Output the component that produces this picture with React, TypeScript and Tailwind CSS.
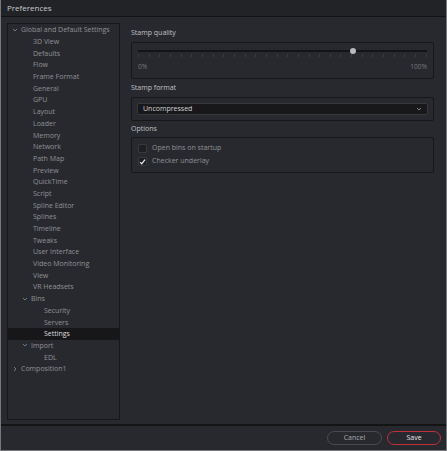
import React from 'react'

interface TreeItem {
  label: string
  depth: number
  chevron?: 'down' | 'right'
  selected?: boolean
}

const tree: TreeItem[] = [
  { label: 'Global and Default Settings', depth: 0, chevron: 'down' },
  { label: '3D View', depth: 1 },
  { label: 'Defaults', depth: 1 },
  { label: 'Flow', depth: 1 },
  { label: 'Frame Format', depth: 1 },
  { label: 'General', depth: 1 },
  { label: 'GPU', depth: 1 },
  { label: 'Layout', depth: 1 },
  { label: 'Loader', depth: 1 },
  { label: 'Memory', depth: 1 },
  { label: 'Network', depth: 1 },
  { label: 'Path Map', depth: 1 },
  { label: 'Preview', depth: 1 },
  { label: 'QuickTime', depth: 1 },
  { label: 'Script', depth: 1 },
  { label: 'Spline Editor', depth: 1 },
  { label: 'Splines', depth: 1 },
  { label: 'Timeline', depth: 1 },
  { label: 'Tweaks', depth: 1 },
  { label: 'User Interface', depth: 1 },
  { label: 'Video Monitoring', depth: 1 },
  { label: 'View', depth: 1 },
  { label: 'VR Headsets', depth: 1 },
  { label: 'Bins', depth: 1, chevron: 'down' },
  { label: 'Security', depth: 2 },
  { label: 'Servers', depth: 2 },
  { label: 'Settings', depth: 2, selected: true },
  { label: 'Import', depth: 1, chevron: 'down' },
  { label: 'EDL', depth: 2 },
  { label: 'Composition1', depth: 0, chevron: 'right' },
]

const indent = ['pl-[13px]', 'pl-[25px]', 'pl-[36px]']

function Chevron({ dir }: { dir: 'down' | 'right' }) {
  return (
    <svg width="6" height="6" viewBox="0 0 6 6" className="mr-[1px] shrink-0">
      {dir === 'down'
        ? <path d="M1 2 L3 4 L5 2" fill="none" stroke="#8a8b90" strokeWidth="0.8" />
        : <path d="M2 1 L4 3 L2 5" fill="none" stroke="#8a8b90" strokeWidth="0.8" />}
    </svg>
  )
}

function Checkbox({ checked }: { checked?: boolean }) {
  return (
    <div className="w-[9px] h-[9px] rounded-[1px] bg-[#1e1f22] border border-[#38393d] flex items-center justify-center">
      {checked && (
        <svg width="8" height="8" viewBox="0 0 8 8">
          <path d="M1.3 4.2 L3.2 6.2 L6.8 1.4" fill="none" stroke="#f0f0f0" strokeWidth="1.4" />
        </svg>
      )}
    </div>
  )
}

export default function App() {
  const ticks = Array.from({ length: 28 })

  return (
    <div
      className="w-[447px] h-[451px] bg-[#28292e] flex flex-col border-x border-b border-[#77787c] text-[#909196] overflow-hidden"
      style={{ fontFamily: '"Open Sans", "Noto Sans", sans-serif' }}
    >
      {/* Title bar */}
      <div className="h-[17px] shrink-0 bg-[#222327] border-b border-[#131315] flex items-center pl-[6px] text-[8px] text-[#c9c9cc]">
        Preferences
      </div>

      {/* Body */}
      <div className="flex flex-1 pt-[6px] pl-[6px]">
        {/* Tree */}
        <div className="w-[113px] h-[397px] border border-[#17171a] bg-[#28292e] flex flex-col">
          {tree.map((item) => (
            <div
              key={item.label}
              className={`h-[11.7px] flex items-center text-[7px] leading-none whitespace-nowrap ${
                item.selected ? 'bg-[#17171a] text-[#dcdcdf]' : ''
              } ${item.chevron ? (item.depth === 0 ? 'pl-[4px]' : 'pl-[14px]') : indent[item.depth]} ${
                item.chevron ? 'gap-[2px]' : ''
              }`}
            >
              {item.chevron && <Chevron dir={item.chevron} />}
              <span>{item.label}</span>
            </div>
          ))}
        </div>

        {/* Settings */}
        <div className="ml-[11px] pt-[2px] w-[303px] flex flex-col text-[7px]">
          <div className="h-[17px] flex items-center text-[#c0c1c5]">Stamp quality</div>
          <div className="h-[37px] border border-[#17171a] rounded-[2px] px-[6px] pt-[6px] flex flex-col">
            <div className="relative h-[4px] flex items-center">
              <div className="w-full h-[2px] bg-[#141416]" />
              <div className="absolute left-[212px] w-[6px] h-[6px] rounded-full bg-[#b8b9bc]" />
            </div>
            <div className="flex justify-between mt-[1px] h-[3px]">
              {ticks.map((_, i) => (
                <div key={i} className="w-px h-[3px] bg-[#3a3b40]" />
              ))}
            </div>
            <div className="flex justify-between mt-[7px] text-[6.6px] text-[#76777c] leading-none">
              <span>0%</span>
              <span>100%</span>
            </div>
          </div>

          <div className="h-[17px] mt-[1px] flex items-center text-[#c0c1c5]">Stamp format</div>
          <div className="h-[24px] border border-[#17171a] rounded-[2px] px-[5px] flex items-center">
            <div className="w-full h-[12px] bg-[#18181b] border border-[#37383c] rounded-[2px] flex items-center justify-between px-[5px] text-[#d4d4d7]">
              <span>Uncompressed</span>
              <svg width="6" height="6" viewBox="0 0 6 6">
                <path d="M1 2 L3 4 L5 2" fill="none" stroke="#9a9ba0" strokeWidth="0.8" />
              </svg>
            </div>
          </div>

          <div className="h-[16px] flex items-center text-[#c0c1c5]">Options</div>
          <div className="h-[36px] border border-[#17171a] rounded-[2px] px-[6px] flex flex-col justify-center gap-[3px]">
            <div className="h-[10px] flex items-center gap-[5px]">
              <Checkbox />
              <span>Open bins on startup</span>
            </div>
            <div className="h-[10px] flex items-center gap-[5px]">
              <Checkbox checked />
              <span>Checker underlay</span>
            </div>
          </div>
        </div>
      </div>

      {/* Footer */}
      <div className="h-[26px] shrink-0 border-t-2 border-[#141416] flex items-center justify-end gap-[5px] pr-[5px]">
        <button className="w-[55px] h-[14px] rounded-full border border-[#4a4b50] text-[7px] text-[#a8a9ad]">
          Cancel
        </button>
        <button className="w-[54px] h-[14px] rounded-full border border-[#bf3038] text-[7px] text-[#e6e6e8]">
          Save
        </button>
      </div>
    </div>
  )
}
